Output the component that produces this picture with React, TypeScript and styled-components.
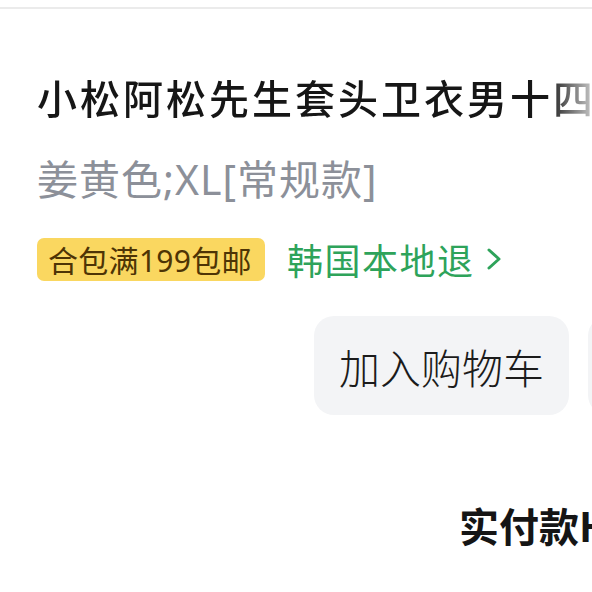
import React from "react";
import styled, { createGlobalStyle } from "styled-components";

const Global = createGlobalStyle`
  html, body { margin: 0; padding: 0; background: #ffffff; }
  body { overflow: hidden; font-family: "Noto Sans CJK SC", "Noto Sans", sans-serif; }
`;

const Page = styled.div`
  width: 592px;
  height: 592px;
  overflow: hidden;
  background: #ffffff;
  display: flex;
  flex-direction: column;
`;

const TopRule = styled.div`
  margin-top: 7px;
  height: 2px;
  background: #ebebeb;
  flex: none;
`;

const Body = styled.div`
  display: flex;
  flex-direction: column;
  padding-left: 37px;
`;

const Title = styled.div`
  margin-top: 63px;
  height: 50px;
  line-height: 50px;
  font-size: 40px;
  letter-spacing: 3px;
  font-weight: 500;
  color: #161616;
  white-space: nowrap;
  overflow: hidden;
  width: 555px;
  -webkit-mask-image: linear-gradient(to right, #000 0, #000 510px, rgba(0,0,0,0.25) 555px);
  mask-image: linear-gradient(to right, #000 0, #000 510px, rgba(0,0,0,0.25) 555px);
`;

const Spec = styled.div`
  margin-top: 34px;
  height: 46px;
  line-height: 46px;
  font-family: "Noto Sans", "Noto Sans CJK SC", sans-serif;
  font-size: 41px;
  letter-spacing: 1px;
  color: #8c9099;
  white-space: nowrap;
`;

const TagRow = styled.div`
  margin-top: 35px;
  display: flex;
  align-items: center;
  gap: 22px;
  height: 44px;
`;

const Badge = styled.span`
  display: inline-flex;
  align-items: center;
  height: 43px;
  padding: 0 13px 0 11px;
  border-radius: 7px;
  background: #fad760;
  color: #4e3405;
  font-family: "Noto Sans", "Noto Sans CJK SC", sans-serif;
  font-size: 30px;
  letter-spacing: 0.3px;
  white-space: nowrap;
`;

const ReturnLink = styled.span`
  display: inline-flex;
  align-items: center;
  gap: 10px;
  color: #2ea35a;
  font-size: 36px;
  letter-spacing: 1.5px;
  white-space: nowrap;
`;

const ButtonRow = styled.div`
  margin-top: 35px;
  margin-left: 277px;
  display: flex;
  gap: 19px;
`;

const ActionButton = styled.div<{ $wide?: boolean }>`
  flex: none;
  height: 99px;
  width: ${(p) => (p.$wide ? "260px" : "255px")};
  border-radius: 20px;
  background: #f3f4f6;
  display: flex;
  align-items: center;
  justify-content: center;
  font-size: 41px;
  font-weight: 300;
  color: #1b1b1b;
  white-space: nowrap;
`;

const PayRow = styled.div`
  margin-top: 85px;
  margin-left: 422px;
  height: 50px;
  line-height: 50px;
  font-size: 40px;
  font-weight: 700;
  color: #151515;
  white-space: nowrap;
`;

const Chevron = () => (
  <svg width="20" height="26" viewBox="0 0 20 26" fill="none">
    <path d="M5 4 L15 13 L5 22" stroke="#2ea35a" strokeWidth="3" strokeLinecap="round" strokeLinejoin="round" />
  </svg>
);

export default function App() {
  return (
    <Page>
      <Global />
      <TopRule />
      <Body>
        <Title>小松阿松先生套头卫衣男十四行诗</Title>
        <Spec>姜黄色;XL[常规款]</Spec>
        <TagRow>
          <Badge>合包满199包邮</Badge>
          <ReturnLink>
            韩国本地退
            <Chevron />
          </ReturnLink>
        </TagRow>
        <ButtonRow>
          <ActionButton>加入购物车</ActionButton>
          <ActionButton $wide>立即购买</ActionButton>
        </ButtonRow>
        <PayRow>实付款HK$</PayRow>
      </Body>
    </Page>
  );
}
